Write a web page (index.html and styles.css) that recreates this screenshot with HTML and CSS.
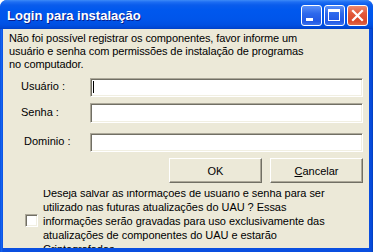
FILE: index.html
```html
<!DOCTYPE html>
<html lang="pt">
<head>
<meta charset="utf-8">
<title>Login para instalação</title>
<link rel="stylesheet" href="styles.css">
</head>
<body>
<div class="window">
  <div class="titlebar">
    <span class="title">Login para instalação</span>
    <div class="caption-buttons">
      <span class="cbtn">
        <svg width="21" height="21" viewBox="0 0 21 21"><rect x="5" y="13" width="7" height="3" fill="#fff"/></svg>
      </span>
      <span class="cbtn">
        <svg width="21" height="21" viewBox="0 0 21 21"><rect x="4" y="4" width="12" height="3" fill="#fff"/><rect x="4.5" y="4.5" width="11" height="11" fill="none" stroke="#fff"/></svg>
      </span>
      <span class="cbtn close">
        <svg width="21" height="21" viewBox="0 0 21 21"><path d="M6 6 L15 15 M15 6 L6 15" stroke="#fff" stroke-width="2.2" stroke-linecap="square"/></svg>
      </span>
    </div>
  </div>
  <div class="client">
    <p class="msg">Não foi possível registrar os componentes, favor informe um<br>usuário e senha com permissões de instalação de programas<br>no computador.</p>
    <div class="row row-user">
      <label class="lbl">Usuário :</label>
      <div class="field"><span class="caret"></span></div>
    </div>
    <div class="row row-pass">
      <label class="lbl">Senha :</label>
      <div class="field"></div>
    </div>
    <div class="row row-domain">
      <label class="lbl lbl-domain">Dominio :</label>
      <div class="field"></div>
    </div>
    <div class="actions">
      <span class="btn">OK</span>
      <span class="btn"><u>C</u>ancelar</span>
    </div>
    <div class="check-row">
      <span class="checkbox"></span>
      <div class="check-clip">
        <div class="check-text">Deseja salvar as informações de usuario e senha para ser<br>utilizado nas futuras atualizações do UAU ? Essas<br>informações serão gravadas para uso exclusivamente das<br>atualizações de componentes do UAU e estarão<br>Criptografadas</div>
      </div>
    </div>
  </div>
</div>
</body>
</html>
```
FILE: styles.css
```css
html, body {
  margin: 0;
  padding: 0;
  width: 373px;
  height: 252px;
  overflow: hidden;
  background: #fff;
}

.window {
  width: 373px;
  height: 252px;
  display: flex;
  flex-direction: column;
  background: linear-gradient(to right, #0842CF 0, #166AF6 1px, #0A4FE0 3px, #0A4FE0 369px, #0548D8 372px, #003BB0 373px);
  border-radius: 7px 7px 0 0;
  overflow: hidden;
}

.titlebar {
  height: 29px;
  flex: 0 0 29px;
  display: flex;
  align-items: center;
  justify-content: space-between;
  padding: 0 5px 0 7px;
  box-sizing: border-box;
  background: linear-gradient(to bottom, #3D8BF7 0, #1E6EF3 2px, #0A5CEC 5px, #0058EE 10px, #0055EA 20px, #0050E2 25px, #0046D2 28px, #003FC2 29px);
}

.title {
  font-family: "Liberation Sans", Arial, sans-serif;
  font-weight: bold;
  font-size: 13px;
  color: #fff;
  text-shadow: 1px 1px 0 #0A1E8C;
  margin-top: 2px;
}

.caption-buttons {
  display: flex;
  gap: 2px;
  margin-top: 2px;
}

.cbtn {
  width: 21px;
  height: 21px;
  box-sizing: border-box;
  border: 1px solid #fff;
  border-radius: 3px;
  background: linear-gradient(to bottom, #5A90F8 0, #2D68EC 40%, #2158E4 80%, #3A72EE 100%);
  display: flex;
  align-items: center;
  justify-content: center;
  overflow: hidden;
}

.cbtn svg {
  display: block;
  margin: -1px;
}

.cbtn.close {
  background: linear-gradient(to bottom, #EC8A6F 0, #E2593A 40%, #D9492A 80%, #E06A4C 100%);
}

.client {
  flex: 1;
  margin: 0 4px 4px 3px;
  background: #ECE9D8;
  overflow: hidden;
  font-family: "Liberation Sans", Arial, sans-serif;
  font-size: 11px;
  color: #000;
}

.msg {
  margin: 3px 0 0 6px;
  line-height: 13px;
  white-space: nowrap;
  letter-spacing: -0.1px;
}

.row {
  display: flex;
  align-items: center;
  margin-right: 6px;
}

.row-user { margin-top: 7px; height: 19px; }
.row-pass { margin-top: 6px; height: 20px; }
.row-domain { margin-top: 10px; height: 19px; }

.lbl {
  width: 87px;
  flex: 0 0 87px;
  box-sizing: border-box;
  padding-left: 18px;
  margin-top: -3px;
}

.row-pass .lbl { margin-top: -2px; }

.lbl-domain {
  padding-left: 21px;
}

.field {
  flex: 1;
  height: 100%;
  box-sizing: border-box;
  background: #fff;
  border-style: solid;
  border-width: 1px;
  border-color: #ACA899 #FFFFFF #FFFFFF #ACA899;
  box-shadow: inset 1px 1px 0 #716F64, inset -1px -1px 0 #F1EFE2;
  position: relative;
}

.caret {
  position: absolute;
  left: 2px;
  top: 2px;
  width: 1px;
  height: 12px;
  background: #000;
}

.actions {
  display: flex;
  justify-content: flex-end;
  gap: 8px;
  margin: 6px 6px 0 0;
}

.btn {
  width: 93px;
  height: 25px;
  box-sizing: border-box;
  display: flex;
  align-items: center;
  justify-content: center;
  background: #ECE9D8;
  border-style: solid;
  border-width: 1px;
  border-color: #FFFFFF #716F64 #716F64 #FFFFFF;
  box-shadow: inset -1px -1px 0 #ACA899;
  font-size: 11px;
}

.check-row {
  display: flex;
  align-items: center;
  margin-top: 7px;
  height: 62px;
}

.checkbox {
  width: 13px;
  height: 13px;
  flex: 0 0 13px;
  box-sizing: border-box;
  margin-left: 22px;
  margin-top: -2px;
  background: #fff;
  border-style: solid;
  border-width: 1px;
  border-color: #ACA899 #FFFFFF #FFFFFF #ACA899;
  box-shadow: inset 1px 1px 0 #716F64, inset -1px -1px 0 #F1EFE2;
}

.check-clip {
  margin-left: 5px;
  height: 62px;
  overflow: hidden;
}

.check-text {
  margin-top: -4px;
  line-height: 14px;
  white-space: nowrap;
  letter-spacing: -0.05px;
}
```
